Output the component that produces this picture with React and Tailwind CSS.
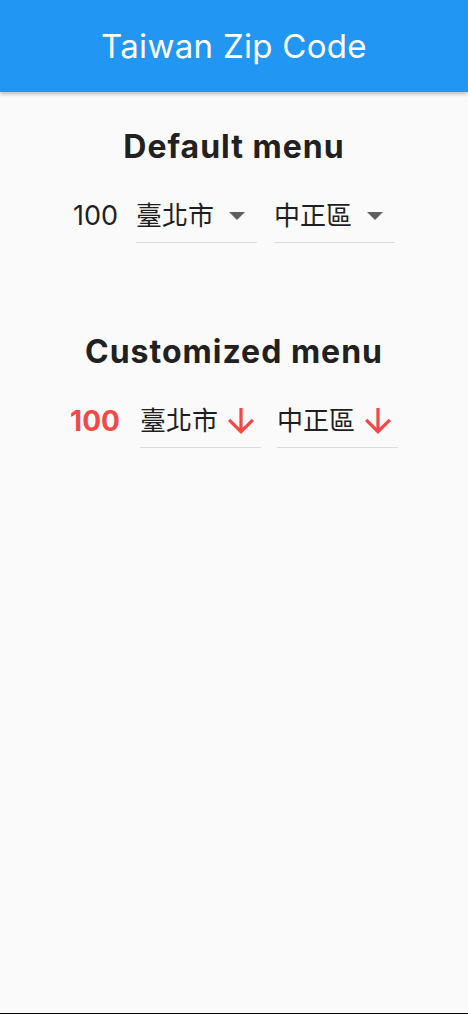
import React from "react";

const font = { fontFamily: 'Inter, "Noto Sans CJK TC", sans-serif' };

function DropTriangle() {
  return (
    <svg width="16" height="8" viewBox="0 0 16 8" className="shrink-0">
      <path d="M0 0h16l-8 8z" fill="#5f5f5f" />
    </svg>
  );
}

function RedArrow() {
  return (
    <svg width="26" height="26" viewBox="4 4 16 16" className="shrink-0">
      <path
        d="M20 12l-1.41-1.41L13 16.17V4h-2v12.17l-5.58-5.59L4 12l8 8 8-8z"
        fill="#ef4a48"
      />
    </svg>
  );
}

function DefaultDropdown({ label }) {
  return (
    <div className="flex w-[121px] items-center border-b border-[#dcdcdc] pb-[8px]">
      <span className="w-[78px] shrink-0 whitespace-nowrap text-[26px] leading-[36px] text-[#1f1f1f]">{label}</span>
      <span className="ml-[15px] flex">
        <DropTriangle />
      </span>
    </div>
  );
}

function CustomDropdown({ label }) {
  return (
    <div className="flex w-[121px] items-center border-b border-[#dcdcdc] pb-[8px]">
      <span className="w-[78px] shrink-0 whitespace-nowrap text-[26px] leading-[36px] text-[#1f1f1f]">{label}</span>
      <span className="ml-[10px] flex">
        <RedArrow />
      </span>
    </div>
  );
}

export default function App() {
  return (
    <div
      className="flex h-[1014px] w-full flex-col border-b border-black bg-[#fafafa]"
      style={font}
    >
      <header className="relative z-10 flex h-[92px] shrink-0 items-center justify-center bg-[#2196f3] shadow-[0_2px_4px_rgba(0,0,0,0.25)]">
        <h1 className="text-[33px] font-normal leading-none tracking-[0.3px] text-white">
          Taiwan Zip Code
        </h1>
      </header>

      <main className="flex flex-col items-center">
        <h2 className="mt-[37px] text-[32px] font-bold leading-[36px] tracking-[1px] text-[#212121]">
          Default menu
        </h2>
        <div className="mt-[33px] flex items-start">
          <span className="mr-[18px] text-[27px] leading-[36px] text-[#212121]">100</span>
          <DefaultDropdown label="臺北市" />
          <span className="w-[17px]" />
          <DefaultDropdown label="中正區" />
        </div>

        <h2 className="mt-[91px] text-[32px] font-bold leading-[36px] tracking-[1px] text-[#212121]">
          Customized menu
        </h2>
        <div className="mt-[33px] flex items-start">
          <span className="mr-[20px] text-[28px] font-bold leading-[36px] text-[#ef4a48]">
            100
          </span>
          <CustomDropdown label="臺北市" />
          <span className="w-[16px]" />
          <CustomDropdown label="中正區" />
        </div>
      </main>
    </div>
  );
}
